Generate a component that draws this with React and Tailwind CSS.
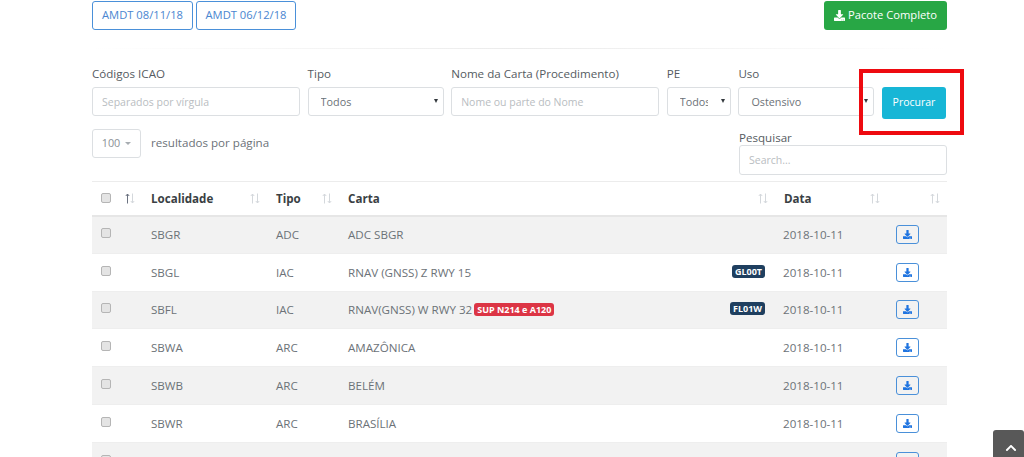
import React from 'react';
import { FaDownload, FaChevronUp } from 'react-icons/fa';

const rows = [
  ['SBGR', 'ADC', 'ADC SBGR'],
  ['SBGL', 'IAC', 'RNAV (GNSS) Z RWY 15', null, 'GL00T'],
  ['SBFL', 'IAC', 'RNAV(GNSS) W RWY 32', 'SUP N214 e A120', 'FL01W'],
  ['SBWA', 'ARC', 'AMAZÔNICA'],
  ['SBWB', 'ARC', 'BELÉM'],
  ['SBWR', 'ARC', 'BRASÍLIA'],
  ['SBWJ', 'ARC', 'BOA VISTA'],
];

function Sort({ active }) {
  return (
    <svg width="10" height="11" viewBox="0 0 10 11" className="shrink-0" fill="none" strokeWidth="1">
      <path d="M2.5 10.5V1M.8 3 2.5 1 4.2 3" stroke={active ? '#6b7280' : '#d4d8dc'} />
      <path d="M7.5 .5V10M5.8 8 7.5 10 9.2 8" stroke="#d4d8dc" />
    </svg>
  );
}

function Check() {
  return <span className="block h-[10px] w-[10px] rounded-[2px] border border-[#b5b5b5] bg-[#e4e4e4]" />;
}

function Head({ label, active, last }) {
  return (
    <th className={`h-[34px] border-b-2 border-[#e6e6e6] p-0 pt-px text-left font-bold text-[#3a3f44] ${last ? 'pr-[7px]' : 'pr-1'}`}>
      <div className={`flex items-center justify-between ${label ? 'pl-3' : ''}`}>
        <span>{label}</span>
        <Sort active={active} />
      </div>
    </th>
  );
}

function Field({ label, className, children }) {
  return (
    <div className={`flex flex-col ${className}`}>
      <label className="h-[21px] leading-[16px] text-[#555b61]">{label}</label>
      {children}
    </div>
  );
}

function Select({ value }) {
  return (
    <div className="relative">
      <select
        defaultValue={value}
        className="h-[29px] w-full appearance-none rounded-[3px] border border-[#dcdfe2] bg-white pb-0 pl-3 pr-[22px] pt-px text-[10.8px] text-[#6c7278] outline-none"
      >
        <option>{value}</option>
      </select>
      <span className="absolute right-[6px] top-[12px] h-0 w-0 border-x-[2.5px] border-t-[4px] border-x-transparent border-t-[#33383d]" />
    </div>
  );
}

const input = 'h-[29px] w-full rounded-[3px] border border-[#dcdfe2] bg-white px-[9px] text-[10.5px] outline-none placeholder:text-[#b9bdc1]';

export default function App() {
  return (
    <div className="relative h-[457px] w-[1024px] overflow-hidden bg-white pl-[92px] pt-px text-[11.6px] text-[#6c7278] [font-family:'Open_Sans',sans-serif]">
      <div className="w-[855px]">
        <div className="flex h-[29px] items-center justify-between">
          <div className="flex gap-[3px]">
            <button className="h-[29px] w-[101px] rounded-[3px] border border-[#4a90d9] text-[11.2px] text-[#4a86d0]">AMDT 08/11/18</button>
            <button className="h-[29px] w-[100px] rounded-[3px] border border-[#4a90d9] text-[11.2px] text-[#4a86d0]">AMDT 06/12/18</button>
          </div>
          <button className="flex h-[29px] w-[123px] items-center justify-center gap-[3px] rounded-[3px] bg-[#28a745] text-[11.2px] text-white">
            <FaDownload className="text-[11px]" />
            Pacote Completo
          </button>
        </div>

        <div className="mt-[18px] h-px bg-linear-to-r from-transparent via-[#ebebeb] to-transparent" />

        <div className="mt-[17px] flex items-end justify-between">
          <Field label="Códigos ICAO" className="w-[208px]">
            <input className={input} placeholder="Separados por vírgula" />
          </Field>
          <Field label="Tipo" className="w-[136px]">
            <Select value="Todos" />
          </Field>
          <Field label="Nome da Carta (Procedimento)" className="w-[208px]">
            <input className={input} placeholder="Nome ou parte do Nome" />
          </Field>
          <Field label="PE" className="w-[64px]">
            <Select value="Todos" />
          </Field>
          <Field label="Uso" className="w-[136px]">
            <Select value="Ostensivo" />
          </Field>
          <button className="mb-[-3px] mr-px h-[32px] w-[64px] rounded-[3px] bg-[#17b6d6] text-[10.5px] text-white">Procurar</button>
        </div>

        <div className="mt-[13px] flex items-start justify-between">
          <div className="flex items-center">
            <div className="flex h-[29px] w-[49px] items-center justify-center gap-[5px] rounded-[3px] border border-[#dcdfe2] text-[10.8px] text-[#8a9096]">
              100
              <span className="h-0 w-0 border-x-[3px] border-t-[3px] border-x-transparent border-t-[#a8adb2]" />
            </div>
            <span className="-mt-[2px] ml-[10px] text-[#6c7278]">resultados por página</span>
          </div>
          <div className="w-[208px]">
            <label className="block h-[16px] leading-[18px] text-[#555b61]">Pesquisar</label>
            <input className={`${input} h-[30px]`} placeholder="Search..." />
          </div>
        </div>

        <table className="mt-[6px] w-[855px] table-fixed border-collapse border-t border-[#ececec]">
          <colgroup>
            <col className="w-[47px]" />
            <col className="w-[125px]" />
            <col className="w-[72px]" />
            <col className="w-[436px]" />
            <col className="w-[112px]" />
            <col className="w-[63px]" />
          </colgroup>
          <thead>
            <tr>
              <th className="h-[34px] border-b-2 border-[#e6e6e6] p-0 pr-1">
                <div className="flex items-center justify-between pl-[9px]">
                  <Check />
                  <Sort active />
                </div>
              </th>
              <Head label="Localidade" />
              <Head label="Tipo" />
              <Head label="Carta" />
              <Head label="Data" />
              <Head label="" last />
            </tr>
          </thead>
          <tbody>
            {rows.map((r, i) => (
              <tr key={r[0]} className={`h-[37.8px] border-b border-[#eeeeee] ${i % 2 === 0 ? 'bg-[#f2f2f2]' : 'bg-white'}`}>
                <td className="p-0 pb-[3px] pl-[9px]"><Check /></td>
                <td className="p-0 pl-3">{r[0]}</td>
                <td className="p-0 pl-3">{r[1]}</td>
                <td className="p-0 pl-3 pr-[7px]">
                  <div className="flex items-center justify-between">
                    <span className="flex items-center gap-[2px]">
                      {r[2]}
                      {r[3] && <span className="rounded-[3px] bg-[#dc3545] px-[3px] text-[9px] leading-[13px] font-bold text-white">{r[3]}</span>}
                    </span>
                    {r[4] && <span className="-mt-[2px] rounded-[3px] bg-[#1f3f5f] px-[3px] text-[9px] leading-[13px] font-bold text-white">{r[4]}</span>}
                  </div>
                </td>
                <td className="p-0 pl-[11px]">2018-10-11</td>
                <td className="p-0 pl-3">
                  <span className="flex h-[19px] w-[23px] items-center justify-center rounded-[3px] border border-[#4a90d9] text-[#1f74e0]">
                    <FaDownload className="text-[9px]" />
                  </span>
                </td>
              </tr>
            ))}
          </tbody>
        </table>
      </div>

      <div className="absolute left-[859px] top-[69px] h-[66px] w-[105px] border-4 border-[#ee0a10]" />
      <div className="absolute left-[993px] top-[430px] flex h-[27px] w-[31px] justify-center rounded-t-[3px] bg-[#585858] pl-1 pt-[12px] text-white">
        <FaChevronUp className="text-[12px]" />
      </div>
    </div>
  );
}
